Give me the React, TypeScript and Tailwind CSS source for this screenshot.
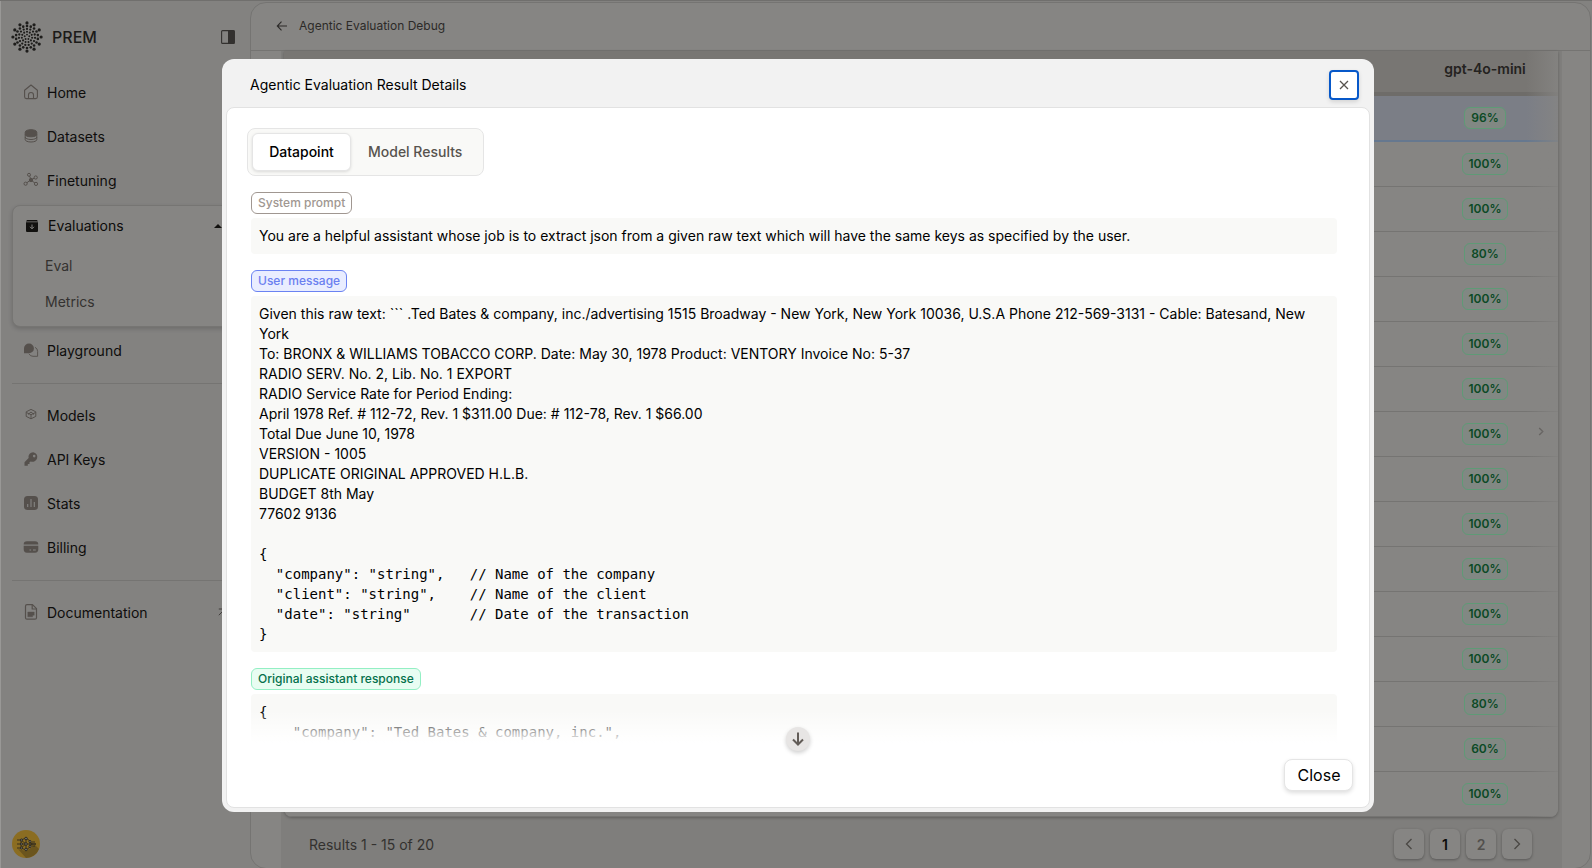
import React from "react";

const dots: { x: number; y: number; r: number }[] = [];
[
  { n: 5, d: 2.4, r: 0.95 },
  { n: 11, d: 5.2, r: 1.05 },
  { n: 15, d: 8.1, r: 1.15 },
  { n: 18, d: 11, r: 1.3 },
  { n: 12, d: 14.1, r: 1.6 },
].forEach(({ n, d, r }) => {
  for (let i = 0; i < n; i++) {
    const a = (i / n) * Math.PI * 2 - Math.PI / 2;
    dots.push({ x: 16 + Math.cos(a) * d, y: 16 + Math.sin(a) * d, r });
  }
});

function Logo() {
  return (
    <svg viewBox="0 0 32 32" className="h-8 w-8 fill-[#1e1d1b]">
      {dots.map((p, i) => (
        <circle key={i} cx={p.x} cy={p.y} r={p.r} />
      ))}
    </svg>
  );
}

const S = "h-4 w-4 shrink-0 text-[#55504c]";

function HomeIcon() {
  return (
    <svg viewBox="0 0 16 16" className={S} fill="none" stroke="currentColor" strokeWidth="1.1" strokeLinejoin="round">
      <path d="M1.6 6.2 8 1l6.400 5.200v6.600c0 1-.8 1.800-1.800 1.800H3.400c-1 0-1.800-.8-1.800-1.800z" />
      <path d="M5.500 14.500v-3.600c0-1.400 1.100-2.400 2.500-2.400s2.500 1 2.500 2.400v3.600" />
    </svg>
  );
}
function DataIcon() {
  return (
    <svg viewBox="0 0 16 16" className={S} fill="none" stroke="currentColor" strokeWidth="1">
      <path fill="currentColor" d="M2.200 4.200C2.200 2.700 4.800 1.700 8 1.700s5.800 1 5.800 2.500v2.200C13.800 7.800 11.200 8.800 8 8.800s-5.800-1-5.800-2.400z" />
      <path d="M2.200 6.500v2.600c0 1.400 2.600 2.400 5.800 2.400s5.800-1 5.800-2.400V6.500M2.200 9v2.600C2.200 13 4.800 14 8 14s5.800-1 5.800-2.400V9" />
    </svg>
  );
}
function TuneIcon() {
  return (
    <svg viewBox="0 0 16 16" className={S} fill="none" stroke="currentColor" strokeWidth="1">
      <path d="M6.600 4.200 7.800 7M3.800 10.800 7.600 8M8 8l3.200-1.800M8 8l4 3.200" />
      <circle cx="6" cy="2.800" r="1.500" />
      <circle cx="2.600" cy="11.700" r="1.600" />
      <circle cx="12.700" cy="5.500" r="1.600" />
      <circle cx="13" cy="11.900" r="1.600" />
      <circle cx="8" cy="8" r="1.700" fill="currentColor" />
    </svg>
  );
}
function ChatIcon() {
  return (
    <svg viewBox="0 0 16 16" className={S}>
      <path fill="currentColor" d="M6 1.500a5 5 0 0 0-5 5v4.800h5a4.900 4.900 0 0 0 0-9.800z" />
      <path fill="none" stroke="currentColor" strokeWidth=".9" d="M12 5.300a4.400 4.400 0 0 1 2.600 4v5H10a4.300 4.300 0 0 1-4-2.500" />
    </svg>
  );
}
function CubeIcon() {
  return (
    <svg viewBox="0 0 16 16" className={S} fill="none" stroke="currentColor" strokeWidth="1" strokeLinejoin="round">
      <path d="m8 2.400 4.800 2.400v4.600L8 11.800 3.200 9.400V4.800z" />
      <path d="M3.400 5.500 8 7.700l4.600-2.200M8 7.700v3.600M5 7.500 8 5l3 2.500" />
    </svg>
  );
}
function KeyIcon() {
  return (
    <svg viewBox="0 0 16 16" className={S}>
      <path fill="currentColor" fillRule="evenodd" d="M10.200 1.200a4.700 4.700 0 0 0-4.600 5.900L1.500 11.200v3.500h3.300v-1.800h1.700v-1.700l1.200-.8a4.800 4.800 0 1 0 2.500-9.200zm1 2.600a1.300 1.300 0 1 1 0 2.600 1.300 1.300 0 0 1 0-2.600z" />
    </svg>
  );
}
function StatsIcon() {
  return (
    <svg viewBox="0 0 16 16" className={S}>
      <rect x="1" y="1" width="14" height="14" rx="3.500" fill="currentColor" />
      <path d="M4.700 9v3M8 4v8M11.300 7v5" stroke="#858482" strokeWidth="1.100" />
    </svg>
  );
}
function CardIcon() {
  return (
    <svg viewBox="0 0 16 16" className={S}>
      <path fill="currentColor" d="M.7 5.600C.7 3.400 1.700 2.300 4 2.300h8c2.300 0 3.300 1.100 3.300 3.300zM.7 6.700h14.600v3.600c0 2.400-1 3.400-3.300 3.400H4c-2.300 0-3.300-1-3.300-3.400z" />
      <path d="M6.500 11h1.600M10 11h2.800" stroke="#858482" strokeWidth="1" />
    </svg>
  );
}
function DocIcon() {
  return (
    <svg viewBox="0 0 16 18" className="h-[18px] w-4 shrink-0 text-[#55504c]" fill="none" stroke="currentColor" strokeWidth="1.200" strokeLinejoin="round">
      <path d="M2.500 3.200c0-.9.600-1.500 1.500-1.500h5.500l4 4v9c0 .9-.6 1.500-1.500 1.500H4c-.9 0-1.500-.6-1.500-1.500z" />
      <path d="M9.200 1.700v4.300h4.300" />
      <path d="M4.800 9h6.400v3.200H9.600v1.600H4.800z" fill="currentColor" strokeWidth=".4" />
    </svg>
  );
}

function Nav({ icon, label, children }: { icon: React.ReactNode; label: string; children?: React.ReactNode }) {
  return (
    <div className="flex h-11 shrink-0 items-center gap-2 pl-[11px] text-[14px] text-[#0e0d0c]">
      {icon}
      <span>{label}</span>
      {children}
    </div>
  );
}

function Sidebar() {
  return (
    <aside className="flex w-[250px] shrink-0 flex-col border-l border-[#999896] pl-[11px]">
      <div className="flex h-[69px] shrink-0 items-center pt-[3px]">
        <div className="-ml-[1px]">
          <Logo />
        </div>
        <span className="ml-[9px] text-[16px] font-medium text-[#1c1b19]">PREM</span>
        <svg viewBox="0 0 14 14" className="ml-auto mr-[15px] h-[14px] w-[14px]">
          <rect x=".6" y=".6" width="12.800" height="12.800" rx="1" fill="none" stroke="#33312f" strokeWidth="1.100" />
          <path d="M7 .5h6.500v13H7z" fill="#33312f" />
        </svg>
      </div>
      <Nav icon={<HomeIcon />} label="Home" />
      <Nav icon={<DataIcon />} label="Datasets" />
      <Nav icon={<TuneIcon />} label="Finetuning" />
      <div className="mt-[3px] mb-px h-[122px] shrink-0 rounded-lg border border-[#767573] bg-[#868583] shadow-[0_2px_4px_#0000002a]">
        <div className="flex h-[39px] items-center pl-[13px] text-[14px] text-[#0c0b0a]">
          <svg viewBox="0 0 12 12" className="h-3 w-3">
            <path fill="#12110f" d="M1 0h10l1 1.600H0zM0 2.200h12V10.500c0 1-.5 1.500-1.500 1.500h-9C.5 12 0 11.500 0 10.500z" />
            <path d="M6 4.500v4M4 6.800l2 2 2-2" stroke="#858482" strokeWidth="1" fill="none" />
          </svg>
          <span className="ml-[10px]">Evaluations</span>
          <svg viewBox="0 0 8 4" className="ml-auto mr-[27px] h-1 w-2">
            <path d="M0 4 4 0l4 4z" fill="#12110f" />
          </svg>
        </div>
        <div className="flex h-9 items-center pl-8 pt-[5px] text-[14px] text-[#343230]">Eval</div>
        <div className="flex h-9 items-center pl-8 pt-[5px] text-[14px] text-[#343230]">Metrics</div>
      </div>
      <Nav icon={<ChatIcon />} label="Playground" />
      <div className="mt-[11px] mb-[9px] h-px shrink-0 bg-[#757472]" />
      <Nav icon={<CubeIcon />} label="Models" />
      <Nav icon={<KeyIcon />} label="API Keys" />
      <Nav icon={<StatsIcon />} label="Stats" />
      <Nav icon={<CardIcon />} label="Billing" />
      <div className="mt-[11px] mb-[9px] h-px shrink-0 bg-[#757472]" />
      <Nav icon={<DocIcon />} label="Documentation">
        <svg viewBox="0 0 8 8" className="ml-auto mr-6 h-2 w-2" fill="none" stroke="#403d3b" strokeWidth="1">
          <path d="M.8 7.200 7 1M.8 1H7v6.200" />
        </svg>
      </Nav>
      <svg viewBox="0 0 28 28" className="mt-auto mb-[10px] h-7 w-7">
        <circle cx="14" cy="14" r="14" fill="#8b6d22" />
        <path d="m6 19 8 9a14 14 0 0 0 13-9l-4-4-9 6z" fill="#6b551e" />
        <g stroke="#24221c" strokeWidth=".8" fill="#77756c">
          <path d="M5 10h4l5-2 4 3 2 3h4M5 14h19M5 18h4l5 2 4-3 2-3M9 10l5 4-5 4M9 10v8M14 8v12M18 11v6M20 12h3M20 16h3" fill="none" />
          <circle cx="9.500" cy="10" r="1.100" />
          <circle cx="9.500" cy="14" r="1.100" />
          <circle cx="9.500" cy="18" r="1.100" />
          <circle cx="14" cy="8.500" r="1.300" />
          <circle cx="14" cy="14" r="1.300" />
          <circle cx="14" cy="19.500" r="1.300" />
          <circle cx="18" cy="11.500" r="1.100" />
          <circle cx="18" cy="16.500" r="1.100" />
        </g>
      </svg>
    </aside>
  );
}

const scores = [96, 100, 100, 80, 100, 100, 100, 100, 100, 100, 100, 100, 100, 80, 60, 100];

function Main() {
  return (
    <main className="mt-px flex h-[867px] w-[1341px] flex-col overflow-hidden rounded-[16px] border border-[#757472] bg-[#868583]">
      <div className="flex h-[48px] shrink-0 items-center border-b border-[#757472] pl-[25px] pb-[2px] text-[12px] text-[#2c2a28]">
        <svg viewBox="0 0 12 12" className="h-3 w-3" fill="none" stroke="#2c2a28" strokeWidth="1.100">
          <path d="M11 6H1.500M5.500 1.700 1.300 6l4.200 4.300" />
        </svg>
        <span className="ml-[11px]">Agentic Evaluation Debug</span>
      </div>
      <div className="ml-[30px] mr-7 flex flex-1 flex-col bg-[#7f7e7c]">
        <div className="relative ml-[3px] mr-1 flex h-[766px] shrink-0 flex-col overflow-hidden rounded-b-lg bg-[#868583] shadow-[0_1px_3px_#00000044]">
          <div className="flex h-[45px] shrink-0 items-center justify-end border-b-4 border-[#6e6c69] bg-[#787673]">
            <span className="w-[146px] pb-[7px] text-center text-[14px] font-semibold text-[#242220]">gpt-4o-mini</span>
          </div>
          {scores.map((s, i) => (
            <div
              key={i}
              className={
                i === 0
                  ? "relative flex h-[46px] shrink-0 items-center justify-end border-b-2 border-[#66788f] bg-[#7b7e86]"
                  : "relative flex h-[45px] shrink-0 items-center justify-end border-b border-[#757472] last:border-0"
              }
            >
              <div className="flex w-[146px] justify-center">
                <span className="flex h-[22px] items-center rounded-md border border-[#5f9a76] bg-[#818883] px-[6px] text-[12px] font-semibold text-[#0b4a25]">{s}%</span>
              </div>
              {i === 7 && (
                <svg viewBox="0 0 6 10" className="absolute right-[14px] top-[15px] h-[9px] w-[6px]" fill="none" stroke="#55524f" strokeWidth="1.500">
                  <path d="m1 1 4 4-4 4" />
                </svg>
              )}
            </div>
          ))}
          <div className="pointer-events-none absolute top-0 right-0 h-full w-8 bg-linear-to-l from-[#868583cc] to-[#86858300]" />
        </div>
        <div className="mt-[12px] flex h-[30px] items-center pl-7 pr-[30px] text-[14px] text-[#33312f]">
          <span>Results 1 - 15 of 20</span>
          <div className="ml-auto flex gap-[6px]">
            {["<", "1", "2", ">"].map((c) => (
              <div
                key={c}
                className={
                  "flex h-[30px] w-[30px] items-center justify-center rounded-md bg-[#868583] text-[14px] font-semibold shadow-[0_1px_3px_#00000050] " +
                  (c === "1" ? "text-[#0c0b0a]" : "text-[#52504d]")
                }
              >
                {c === "1" || c === "2" ? (
                  c
                ) : (
                  <svg viewBox="0 0 8 12" className="h-3 w-2" fill="none" stroke="#4a4744" strokeWidth="1.300">
                    <path d={c === "<" ? "M6.500 1 1.500 6l5 5" : "m1.500 1 5 5-5 5"} />
                  </svg>
                )}
              </div>
            ))}
          </div>
        </div>
      </div>
    </main>
  );
}

const proseText = `Given this raw text: \`\`\` .Ted Bates & company, inc./advertising 1515 Broadway - New York, New York 10036, U.S.A Phone 212-569-3131 - Cable: Batesand, New York
To: BRONX & WILLIAMS TOBACCO CORP. Date: May 30, 1978 Product: VENTORY Invoice No: 5-37
RADIO SERV. No. 2, Lib. No. 1 EXPORT
RADIO Service Rate for Period Ending:
April 1978 Ref. # 112-72, Rev. 1 $311.00 Due: # 112-78, Rev. 1 $66.00
Total Due June 10, 1978
VERSION - 1005
DUPLICATE ORIGINAL APPROVED H.L.B.
BUDGET 8th May
77602 9136`;

const schemaText = `{
  "company": "string",   // Name of the company
  "client": "string",    // Name of the client
  "date": "string"       // Date of the transaction
}`;

const answerText = `{
    "company": "Ted Bates & company, inc.",`;

const mono = "whitespace-pre font-['DejaVu_Sans_Mono',monospace] text-[14px] leading-5";
const badge = "flex h-[22px] w-fit items-center rounded-[6px] border px-[6px] text-[12px] font-medium";
const block = "mt-1 rounded bg-[#f9f9f7] p-2 text-[14px] leading-5";

function Modal() {
  return (
    <div className="flex h-[753px] w-[1152px] flex-col rounded-xl bg-[#f2f2f2] px-1 pb-1 text-black">
      <div className="flex h-12 shrink-0 items-center justify-between pl-6 pr-[11px] pt-[3px]">
        <h2 className="text-[14px]">Agentic Evaluation Result Details</h2>
        <button className="flex h-[30px] w-[30px] items-center justify-center rounded-[4px] border-2 border-[#0758c9] bg-white shadow-[0_2px_4px_#00000020]">
          <svg viewBox="0 0 10 10" className="h-[10px] w-[10px]" fill="none" stroke="#57534e" strokeWidth="1.300">
            <path d="m1 1 8 8M9 1 1 9" />
          </svg>
        </button>
      </div>
      <div className="relative flex flex-1 flex-col overflow-hidden rounded-lg border border-[#e2e2e2] bg-white">
        <div className="h-[635px] shrink-0 overflow-hidden pl-6 pr-8 pt-5">
          <div className="-ml-1 flex h-12 w-[237px] rounded-lg border border-[#e5e5e5] bg-[#f9f9f7] p-1 text-[14px] font-medium">
            <div className="flex h-[38px] w-[99px] items-center justify-center rounded-md border border-[#e5e5e5] bg-white pb-px shadow-[0_1px_3px_#00000020]">Datapoint</div>
            <div className="flex flex-1 items-center pb-[2px] pl-[17px] text-[#57534e]">Model Results</div>
          </div>
          <div className={badge + " mt-4 border-[#a09791] text-[#a09791]"}>System prompt</div>
          <div className={block}>You are a helpful assistant whose job is to extract json from a given raw text which will have the same keys as specified by the user.</div>
          <div className={badge + " mt-4 border-[#6b83f2] bg-[#e9edff] text-[#6b7ff0]"}>User message</div>
          <div className={block}>
            <div className="whitespace-pre-wrap">{proseText}</div>
            <div className="h-5" />
            <pre className={mono}>{schemaText}</pre>
          </div>
          <div className={badge + " mt-4 border-[#93efc4] bg-[#e8fdf2] text-[#04704b]"}>Original assistant response</div>
          <div className={block}>
            <pre className={mono}>{answerText}</pre>
          </div>
        </div>
        <div className="absolute left-0 top-[602px] h-[33px] w-full bg-linear-to-t from-white to-transparent" />
        <div className="absolute left-[559px] top-[619px] flex h-6 w-6 items-center justify-center rounded-full bg-[#e7e5e4] shadow-[0_2px_4px_#00000030]">
          <svg viewBox="0 0 14 14" className="h-[14px] w-[14px]" fill="none" stroke="#625c57" strokeWidth="2">
            <path d="M7 .5v12M2 7.500l5 5 5-5" />
          </svg>
        </div>
        <div className="flex flex-1 items-start justify-end pr-4 pt-4">
          <button className="flex h-8 w-[69px] items-center justify-center rounded-lg border border-[#e5e5e5] bg-white pl-px text-[16px] shadow-[0_2px_4px_#00000022]">Close</button>
        </div>
      </div>
    </div>
  );
}

export default function App() {
  return (
    <div className="relative h-[868px] w-[1592px] overflow-hidden bg-[#838280] font-['Inter',sans-serif]">
      <div className="flex h-full border-t border-[#706f6d]">
        <Sidebar />
        <Main />
      </div>
      <div className="absolute left-[222px] top-[59px]">
        <Modal />
      </div>
    </div>
  );
}
